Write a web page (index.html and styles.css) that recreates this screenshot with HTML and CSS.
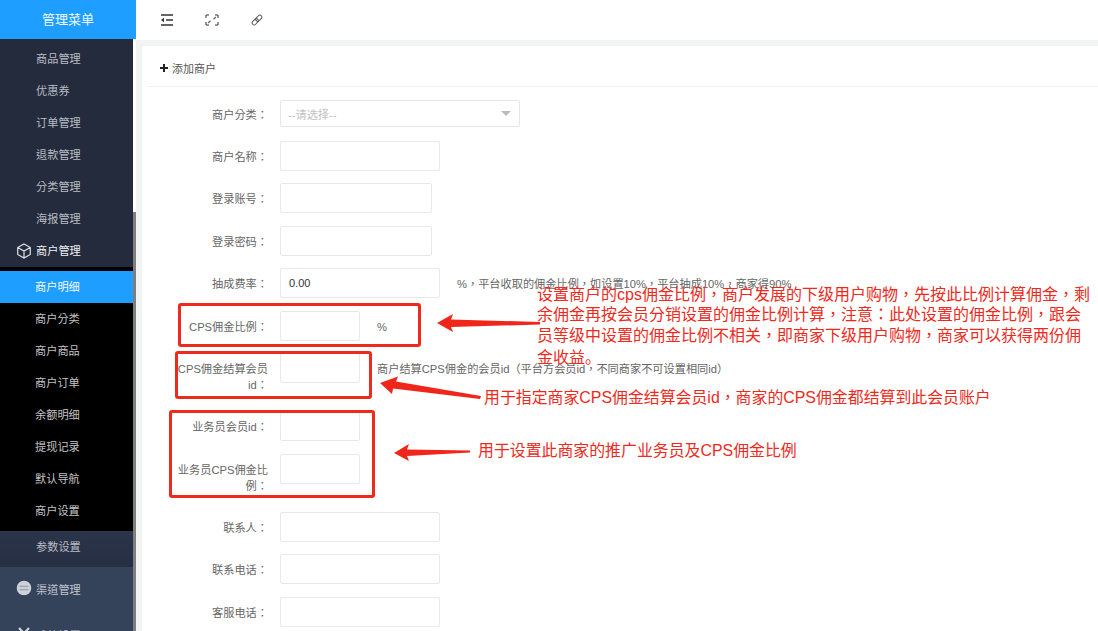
FILE: index.html
```html
<!DOCTYPE html>
<html>
<head>
<meta charset="utf-8">
<title>添加商户</title>
<link rel="stylesheet" href="styles.css">
</head>
<body>
<header class="topbar">
  <div class="logo">管理菜单</div>
  <div class="tools">
    <svg class="tool" viewBox="0 0 14 12"><path d="M1 1h12M6 6h7M1 11h12" stroke="#333" stroke-width="1.3" fill="none"/><path d="M1 6l3-2.2v4.4z" fill="#333"/></svg>
    <svg class="tool" viewBox="0 0 14 12"><path d="M1 4V1h3M10 1h3v3M1 8v3h3M10 11h3V8" stroke="#333" stroke-width="1" fill="none"/><path d="M3 9L5.500 6.800M11 3L8.500 5.200" stroke="#666" stroke-width="1.200"/></svg>
    <svg class="tool" viewBox="0 0 14 12"><g transform="rotate(-45 7 6)" fill="none" stroke="#555" stroke-width="1"><rect x="1" y="4" width="7" height="4" rx="2"/><rect x="6" y="4" width="7" height="4" rx="2"/></g></svg>
  </div>
</header>
<div class="shell">
  <aside class="side">
    <nav class="nav">
      <ul class="group">
        <li class="item">商品管理</li>
        <li class="item">优惠券</li>
        <li class="item">订单管理</li>
        <li class="item">退款管理</li>
        <li class="item">分类管理</li>
        <li class="item">海报管理</li>
        <li class="item item-open">
          <svg class="nav-icon" viewBox="0 0 16 16"><path d="M8 1l6.300 3.500v7L8 15l-6.300-3.500v-7zM1.700 4.500L8 8l6.300-3.500M8 8v7" fill="none" stroke="#dfe2e7" stroke-width="1.200"/></svg>
          商户管理
        </li>
      </ul>
      <ul class="submenu">
        <li class="sub sub-active">商户明细</li>
        <li class="sub">商户分类</li>
        <li class="sub">商户商品</li>
        <li class="sub">商户订单</li>
        <li class="sub">余额明细</li>
        <li class="sub">提现记录</li>
        <li class="sub">默认导航</li>
        <li class="sub">商户设置</li>
      </ul>
      <div class="item item-param">参数设置</div>
      <ul class="group-lower">
        <li class="item item-lower">
          <svg class="nav-icon" viewBox="0 0 16 16"><circle cx="8" cy="8" r="7.300" fill="#ccd1da"/><path d="M3.500 6.300h9M3.500 9.700h9" stroke="#9aa3b3" stroke-width="1.300"/></svg>
          渠道管理
        </li>
        <li class="item item-lower item-tools">
          <svg class="nav-icon" viewBox="0 0 16 16"><path d="M3 2l11 12M13 2L2 14" stroke="#ccd1da" stroke-width="2.200"/></svg>
          系统设置
        </li>
      </ul>
    </nav>
    <div class="scrollbar"><div class="thumb"></div></div>
  </aside>
  <main class="main">
    <section class="card">
      <h2 class="card-title">
        <svg class="plus" viewBox="0 0 8 8"><path d="M4 0v8M0 4h8" stroke="#222" stroke-width="2"/></svg>
        添加商户
      </h2>
      <form class="form">
        <div class="row row-select">
          <label class="label">商户分类：</label>
          <div class="select"><span>--请选择--</span><i class="caret"></i></div>
        </div>
        <div class="row"><label class="label">商户名称：</label><input class="input"></div>
        <div class="row"><label class="label">登录账号：</label><input class="input input-m"></div>
        <div class="row"><label class="label">登录密码：</label><input class="input input-m"></div>
        <div class="row"><label class="label">抽成费率：</label><input class="input" value="0.00"><span class="hint">%，平台收取的佣金比例，如设置10%，平台抽成10%，商家得90%</span></div>
        <div class="row"><label class="label">CPS佣金比例：</label><input class="input input-s"><span class="hint">%</span></div>
        <div class="row row-gap"><label class="label">CPS佣金结算会员id：</label><input class="input input-s"><span class="hint">商户结算CPS佣金的会员id（平台方会员id，不同商家不可设置相同id）</span></div>
        <div class="row"><label class="label">业务员会员id：</label><input class="input input-s"></div>
        <div class="row row-gap"><label class="label">业务员CPS佣金比例：</label><input class="input input-s"></div>
        <div class="row"><label class="label">联系人：</label><input class="input"></div>
        <div class="row"><label class="label">联系电话：</label><input class="input"></div>
        <div class="row"><label class="label">客服电话：</label><input class="input"></div>
      </form>
    </section>
  </main>
</div>

<div class="mark mark-1"></div>
<div class="mark mark-2"></div>
<div class="mark mark-3"></div>
<svg class="arrows" viewBox="0 0 1098 631">
  <path d="M437 323L453 314L451 319.500L540 322L540 324.500L451 327L453 332Z" fill="#f0261a"/>
  <path d="M380 383L398 376.500L396 381.500L481 396L480 399L393 388.500L392 394Z" fill="#f0261a"/>
  <path d="M394 453L409 444L407 449.500L470 450.500L470 452.500L407 456L409 461Z" fill="#f0261a"/>
</svg>
<p class="note note-main">设置商户的cps佣金比例，商户发展的下级用户购物，先按此比例计算佣金，剩余佣金再按会员分销设置的佣金比例计算，注意：此处设置的佣金比例，跟会员等级中设置的佣金比例不相关，即商家下级用户购物，商家可以获得两份佣金收益<span class="stop">。</span></p>
<p class="note note-settle">用于指定商家CPS佣金结算会员id，商家的CPS佣金都结算到此会员账户</p>
<p class="note note-sales">用于设置此商家的推广业务员及CPS佣金比例</p>
</body>
</html>
```

FILE: styles.css
```css
* { box-sizing: border-box; }
html, body { height: 631px; }
body {
  margin: 0;
  overflow: hidden;
  position: relative;
  background: #fff;
  font-family: "Liberation Sans", "Noto Sans CJK TC", sans-serif;
  font-size: 11.200px;
  color: #666;
}
ul { list-style: none; margin: 0; padding: 0; }

.topbar { display: flex; height: 39px; background: #fff; }
.logo {
  width: 136px;
  background: #1e9fff;
  color: #f2f8ff;
  font-size: 13px;
  line-height: 39px;
  text-align: center;
}
.tools { display: flex; align-items: center; gap: 31px; padding: 1px 0 0 24px; }
.tool { width: 14px; height: 12px; display: block; }

.shell { display: flex; height: 592px; }
.side { display: flex; width: 136px; flex: none; }
.nav { width: 133px; background: #232b3c; overflow: hidden; }
.scrollbar { width: 3px; padding-top: 173px; background: #fff; }
.thumb { height: 100%; background: #7f7f7f; }

.group { padding-top: 4px; }
.item {
  position: relative;
  height: 32px;
  line-height: 33px;
  padding-left: 36px;
  color: #b9bcc4;
  font-size: 11.200px;
}
.item-open { color: #eef0f3; }
.nav-icon { position: absolute; left: 16px; top: 8px; width: 16px; height: 16px; }
.submenu { background: #000; padding: 4px 0; }
.sub {
  height: 32px;
  line-height: 33px;
  padding-left: 35px;
  color: #c4c4c4;
  font-size: 11.200px;
}
.sub-active { background: #1e9fff; color: #f2f8ff; }
.item-param {
  height: 36px;
  line-height: 33px;
  background: linear-gradient(#2b354a, #262f42);
}
.group-lower { background: #34425a; padding-top: 7px; min-height: 70px; }
.item-lower { height: 46px; line-height: 33px; color: #c0c5cf; }
.item-lower .nav-icon { top: 6px; }
.item-tools { line-height: 32px; }

.main { flex: 1; min-width: 0; border-top: 1px solid #fff; padding: 6px 0 0 6px; background: #f2f4f4; }
.card { height: 100%; background: #fff; padding-left: 6px; }
.card-title {
  display: flex;
  align-items: center;
  gap: 4px;
  height: 41px;
  margin: 0;
  padding: 3px 0 0 12px;
  border-bottom: 1px solid #f2f2f2;
  font-size: 11px;
  font-weight: normal;
  color: #555;
}
.plus { width: 8px; height: 8px; display: block; }

.form { padding-top: 13px; }
.row { display: flex; height: 30px; margin-bottom: 12.450px; }
.row-select { height: 27px; margin-bottom: 14px; }
.row-gap { margin-bottom: 28px; }
.label {
  width: 92px;
  margin: 0 12px 0 28px;
  padding-top: 8px;
  line-height: 16px;
  text-align: right;
  color: #666;
}
.row-select .label { padding-top: 7px; }
.input {
  width: 160px;
  height: 30px;
  padding: 0 8px;
  border: 1px solid #e8e8e8;
  border-radius: 2px;
  outline: none;
  background: #fff;
  font: 11px "Liberation Sans", "Noto Sans CJK TC", sans-serif;
  color: #333;
}
.input-m { width: 152px; }
.input-s { width: 80px; }
.select {
  display: flex;
  align-items: center;
  justify-content: space-between;
  width: 240px;
  height: 27px;
  padding: 0 8px 0 7px;
  border: 1px solid #e6e6e6;
  border-radius: 2px;
  color: #c2c2c2;
}
.caret { border: 5px solid transparent; border-top: 5px solid #bbb; border-bottom: 0; }
.hint { margin-left: 17px; padding-top: 8px; line-height: 16px; color: #666; white-space: nowrap; }

/* Red review annotations drawn over the page */
.mark { position: absolute; border: 3px solid #ee2a1c; border-radius: 3px; }
.mark-1 { left: 178px; top: 303px; width: 243px; height: 44px; }
.mark-2 { left: 175px; top: 351px; width: 197px; height: 48px; }
.mark-3 { left: 169px; top: 410px; width: 206px; height: 88px; }
.arrows { position: absolute; left: 0; top: 0; width: 1098px; height: 631px; pointer-events: none; }
.note { position: absolute; margin: 0; color: #ee2a1c; font-size: 15.900px; }
.note-main { left: 537px; top: 285px; width: 556px; font-size: 16px; line-height: 20.400px; }
.note-settle { left: 484px; top: 389px; white-space: nowrap; line-height: 18px; }
.note-sales { left: 478px; top: 442px; white-space: nowrap; line-height: 18px; }
.stop { font-family: "Noto Sans CJK SC", sans-serif; }
```
